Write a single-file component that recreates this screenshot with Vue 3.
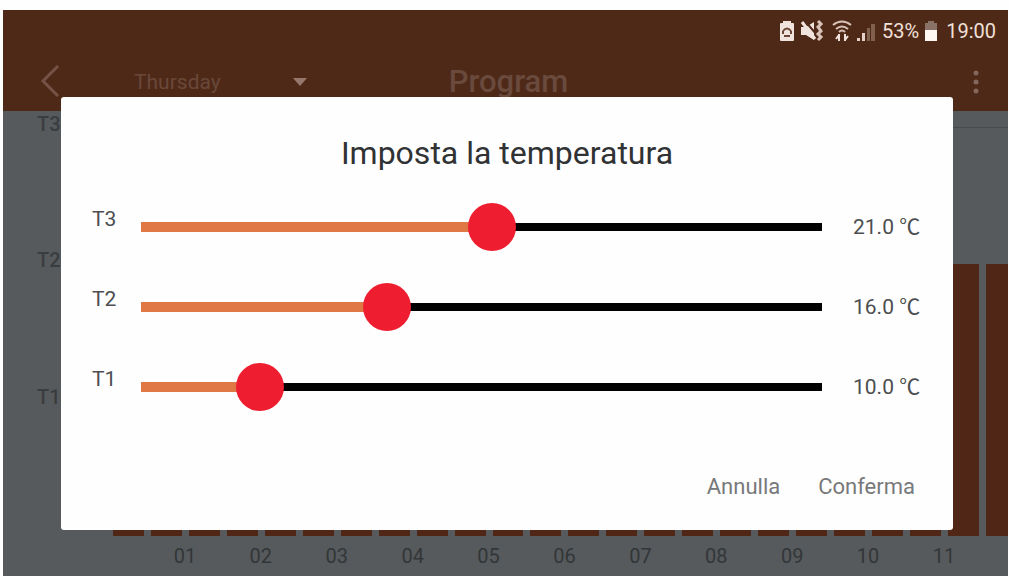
<template>
  <div class="screen">
    <header class="app-header">
      <div class="status-bar">
        <svg class="ic-save" width="16" height="22" viewBox="0 0 16 22">
          <path d="M4 3V1h8v2h2q1 0 1 1v16q0 1-1 1H2q-1 0-1-1V4q0-1 1-1z" fill="#f1e4de" />
          <path d="M4 11q4-5 8 0M4 11v3M12 11v3M5 16h6" fill="none" stroke="#6b4637" stroke-width="2" />
        </svg>
        <svg class="ic-mute" width="24" height="22" viewBox="0 0 24 22">
          <path d="M1 7h5l8-5v18l-8-5H1z" fill="#f1e4de" />
          <path d="M5 1l12 14" stroke="#4f2919" stroke-width="2" />
          <path d="M2 2l13 17" stroke="#f1e4de" stroke-width="3" />
          <path d="M18 1l3 3-3 3 3 4-3 3 3 3-3 3" fill="none" stroke="#d9c3b8" stroke-width="3" />
        </svg>
        <svg class="ic-wifi" width="20" height="22" viewBox="0 0 20 22">
          <path d="M1 5q9-7 18 0M4 9q6-5 12 0M7 12q3-3 6 0" fill="none" stroke="#d9c3b8" stroke-width="2" />
          <path d="M7 14v7M4 19l3-4M13 14v7M13 20l3-4" fill="none" stroke="#f1e4de" stroke-width="2" />
        </svg>
        <svg class="ic-signal" width="20" height="22" viewBox="0 0 20 22">
          <path d="M1 18h3v3H1zM6 13h3v8H6z" fill="#e4d0c6" />
          <path d="M11 8h3v13h-3zM15 4h4v17h-4z" fill="#80604f" />
        </svg>
        <span class="percent">53%</span>
        <svg class="ic-battery" width="14" height="22" viewBox="0 0 14 22">
          <path d="M4 1h6v2h3v8H1V3h3z" fill="#8a7268" />
          <path d="M1 10h12v11H1z" fill="#fff7f2" />
        </svg>
        <span class="clock">19:00</span>
      </div>

      <div class="toolbar">
        <div class="toolbar-left">
          <button class="btn-icon" aria-label="Back">
            <svg width="22" height="34" viewBox="0 0 22 34">
              <path d="M20 1L5 16l15 15" fill="none" stroke="#745346" stroke-width="3" />
            </svg>
          </button>
          <div class="day-wrap">
            <select v-model="day" class="day-select" aria-label="Day">
              <option v-for="d in weekDays" :key="d">{{ d }}</option>
            </select>
            <svg class="caret" width="14" height="8" viewBox="0 0 14 8">
              <path d="M0 0h14L7 8z" fill="#95786b" />
            </svg>
          </div>
        </div>
        <h1>Program</h1>
        <button class="btn-icon btn-more" aria-label="More">
          <svg width="6" height="26" viewBox="0 0 6 26">
            <circle v-for="y in [4, 13, 22]" :key="y" cx="3" :cy="y" r="2.5" fill="#83675b" />
          </svg>
        </button>
      </div>
    </header>

    <main class="chart">
      <div class="axis">
        <span v-for="t in sliders" :key="t.label">{{ t.label }}</span>
      </div>
      <div class="plot">
        <div v-for="n in 24" :key="n" class="bar"></div>
      </div>
      <div class="hours">
        <span v-for="h in 11" :key="h">{{ String(h).padStart(2, '0') }}</span>
      </div>
    </main>

    <section class="dialog" role="dialog" aria-labelledby="dialog-title">
      <h2 id="dialog-title">Imposta la temperatura</h2>
      <div class="rows">
        <div v-for="s in sliders" :key="s.label" class="row">
          <label :for="s.label">{{ s.label }}</label>
          <input
            :id="s.label"
            v-model.number="s.value"
            type="range"
            :min="MIN"
            :max="MAX"
            step="0.5"
            :style="{ '--fill': fill(s.value) }"
          >
          <output :for="s.label">{{ s.value.toFixed(1) }} ℃</output>
        </div>
      </div>
      <div class="actions">
        <button>Annulla</button>
        <button>Conferma</button>
      </div>
    </section>
  </div>
</template>

<script setup>
import { ref } from 'vue'

const MIN = 5.5
const MAX = 35.5

const weekDays = ['Monday', 'Tuesday', 'Wednesday', 'Thursday', 'Friday', 'Saturday', 'Sunday']
const day = ref('Thursday')

const sliders = ref([
  { label: 'T3', value: 21 },
  { label: 'T2', value: 16 },
  { label: 'T1', value: 10 }
])

const fill = (v) => ((v - MIN) / (MAX - MIN)) * 100 + '%'
</script>

<style>
body{margin:0;background:#fefefe}
</style>

<style scoped>
.screen{
  position:relative;
  display:flex;
  flex-direction:column;
  box-sizing:border-box;
  min-height:calc(100vh - 10px);
  margin:10px 1px 0 3px;
  overflow:hidden;
  background:#565a5c;
  font-family:Roboto,"Noto Sans CJK JP",sans-serif;
}
button{padding:0;border:none;background:none;font-family:inherit;cursor:pointer}
svg{display:block}

.app-header{background:#4f2918}
.status-bar{
  display:flex;
  justify-content:flex-end;
  align-items:center;
  height:42px;
  padding-right:12px;
  font-size:20px;
  color:#f1e0d8;
}
.ic-save{margin-right:5px}
.ic-mute{margin-right:8px}
.ic-wifi{margin-right:4px}
.ic-signal{margin-right:6px}
.ic-battery{margin:0 8px 0 5px}

.toolbar{
  display:grid;
  grid-template-columns:1fr auto 1fr;
  align-items:center;
  height:59px;
  padding:0 29px 0 35px;
}
.toolbar-left{display:flex;align-items:center}
.day-wrap{display:flex;align-items:center;margin-left:74px}
.day-select{
  width:174px;
  margin-right:-15px;
  padding:0;
  border:none;
  appearance:none;
  background:none;
  font-family:inherit;
  font-size:21px;
  line-height:28px;
  color:#69483a;
}
.caret{pointer-events:none}
.toolbar h1{margin:0;font-size:31px;font-weight:500;line-height:40px;color:#694a3d}
.btn-more{justify-self:end}

.chart{
  flex:1;
  display:grid;
  grid-template-columns:110px 1fr;
  grid-template-rows:1fr 40px;
}
.axis{
  display:flex;
  flex-direction:column;
  padding:0 0 16px 34px;
  font-size:20px;
  font-weight:500;
  line-height:26px;
  color:#3a3d3f;
}
.axis span{flex:1}
.plot{
  display:flex;
  align-items:flex-end;
  gap:7px;
  margin-top:17px;
  box-shadow:0 -1px #484b4d;
}
.bar{flex:31;height:66.67%;background:#502717}
.bar:last-child{flex:22}
.hours{
  grid-column:1 / -1;
  display:flex;
  padding:0 26px 0 144px;
  font-size:20px;
  line-height:40px;
  text-align:center;
  color:#333638;
}
.hours span{flex:1}

.dialog{
  position:absolute;
  top:87px;
  left:58px;
  right:55px;
  padding:36px 31px 23px;
  border-radius:3px;
  background:#fefefe;
}
.dialog h2{
  margin:0 0 30px;
  font-size:32px;
  font-weight:400;
  line-height:40px;
  text-align:center;
  color:#303234;
}
.rows{display:grid;gap:32px}
.row{
  display:grid;
  grid-template-columns:49px 1fr 100px;
  height:48px;
  font-size:21px;
  color:#4c4e50;
}
.row label{line-height:32px}
.row output{padding-left:31px;line-height:48px;white-space:nowrap}
.row input{
  appearance:none;
  width:100%;
  height:48px;
  margin:0;
  background:
    linear-gradient(#e07845,#e07845) left center / var(--fill) 10px no-repeat,
    linear-gradient(#000,#000) left center / 100% 8px no-repeat;
}
.row input::-webkit-slider-thumb{
  appearance:none;
  width:48px;
  height:48px;
  border:none;
  border-radius:50%;
  background:#ee1d30;
}
.row input::-moz-range-thumb{
  width:48px;
  height:48px;
  border:none;
  border-radius:50%;
  background:#ee1d30;
}
.actions{
  display:flex;
  justify-content:flex-end;
  gap:38px;
  margin-top:56px;
  padding-right:7px;
}
.actions button{font-size:22px;line-height:40px;color:#77797a}
</style>
